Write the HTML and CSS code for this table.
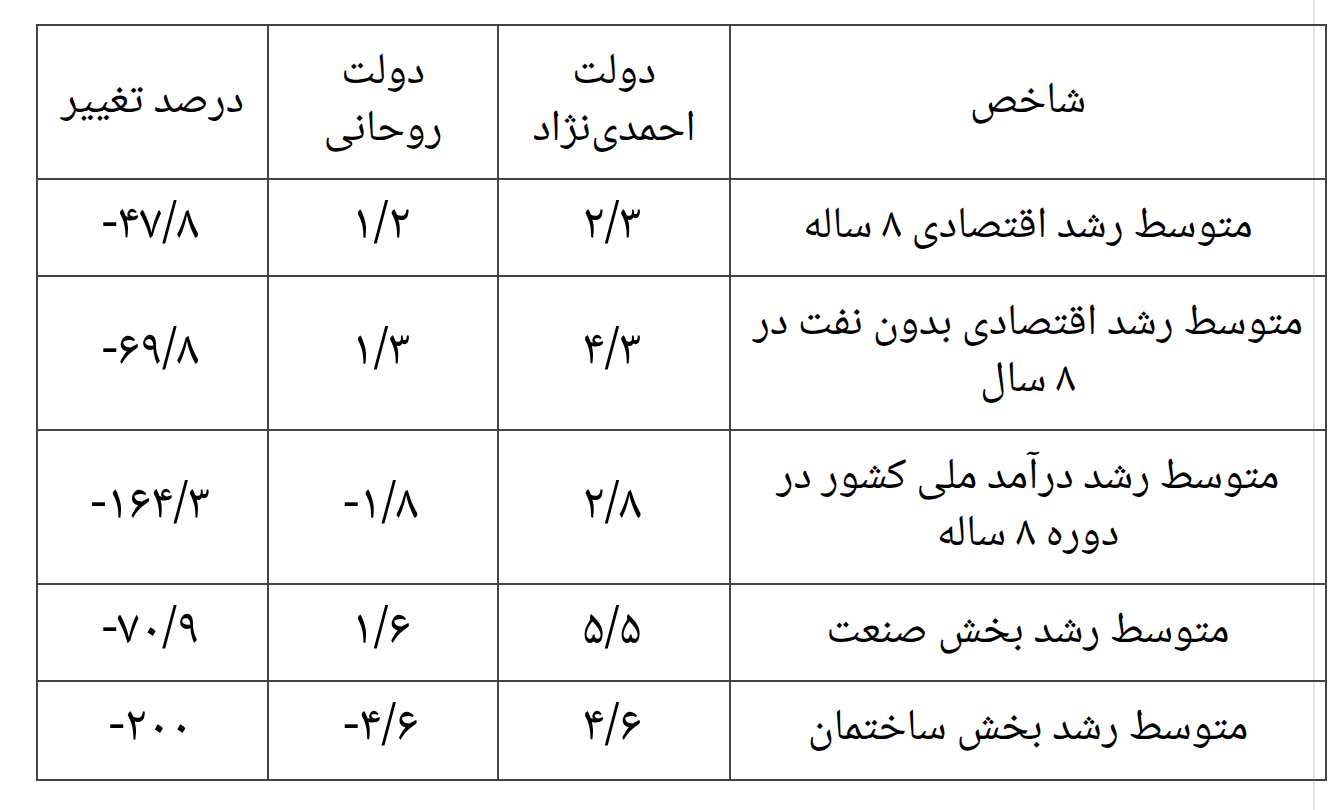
FILE: index.html
```html
<!DOCTYPE html>
<html lang="fa" dir="rtl">
<head>
<meta charset="utf-8">
<title>مقایسه شاخص‌ها</title>
<link rel="stylesheet" href="styles.css">
</head>
<body>
<div class="page">
  <table class="data">
    <colgroup>
      <col class="c-name">
      <col class="c-a">
      <col class="c-b">
      <col class="c-c">
    </colgroup>
    <thead>
      <tr>
        <th>شاخص</th>
        <th>دولت<br>احمدی‌نژاد</th>
        <th>دولت<br>روحانی</th>
        <th>درصد تغییر</th>
      </tr>
    </thead>
    <tbody>
      <tr>
        <td>متوسط رشد اقتصادی ۸ ساله</td>
        <td class="num">۲/۳</td>
        <td class="num">۱/۲</td>
        <td class="num">-۴۷/۸</td>
      </tr>
      <tr>
        <td>متوسط رشد اقتصادی بدون نفت در<br>۸ سال</td>
        <td class="num">۴/۳</td>
        <td class="num">۱/۳</td>
        <td class="num">-۶۹/۸</td>
      </tr>
      <tr>
        <td>متوسط رشد درآمد ملی کشور در<br>دوره ۸ ساله</td>
        <td class="num">۲/۸</td>
        <td class="num">-۱/۸</td>
        <td class="num">-۱۶۴/۳</td>
      </tr>
      <tr>
        <td>متوسط رشد بخش صنعت</td>
        <td class="num">۵/۵</td>
        <td class="num">۱/۶</td>
        <td class="num">-۷۰/۹</td>
      </tr>
      <tr class="last">
        <td>متوسط رشد بخش ساختمان</td>
        <td class="num">۴/۶</td>
        <td class="num">-۴/۶</td>
        <td class="num">-۲۰۰</td>
      </tr>
    </tbody>
  </table>
</div>
</body>
</html>
```

FILE: styles.css
```css
html {
  background-color: #ffffff;
  background-image: linear-gradient(to right, transparent 1313px, #e4e4e4 1313px, #e4e4e4 1315px, transparent 1315px);
}

body {
  margin: 0;
  font-family: "Noto Naskh Arabic", "Noto Sans Arabic", "DejaVu Sans", sans-serif;
  color: #000;
}

.page {
  direction: ltr;
  padding: 24px 0 0 36px;
}

.data {
  direction: rtl;
  table-layout: fixed;
  width: 1291px;
  border-collapse: separate;
  border-spacing: 0;
  border-top: 2px solid #444;
  border-right: 2px solid #444;
}

.c-name { width: 596px; }
.c-a { width: 232px; }
.c-b { width: 230px; }
.c-c { width: 231px; }

.data th,
.data td {
  box-sizing: border-box;
  border-left: 2px solid #444;
  border-bottom: 2px solid #444;
  padding: 19px 4px;
  font-size: 44px;
  font-weight: normal;
  line-height: 57px;
  text-align: center;
  vertical-align: middle;
  white-space: nowrap;
}

.data td.num {
  direction: ltr;
  font-size: 50px;
}

.data tr.last td {
  padding-bottom: 21px;
}
```
